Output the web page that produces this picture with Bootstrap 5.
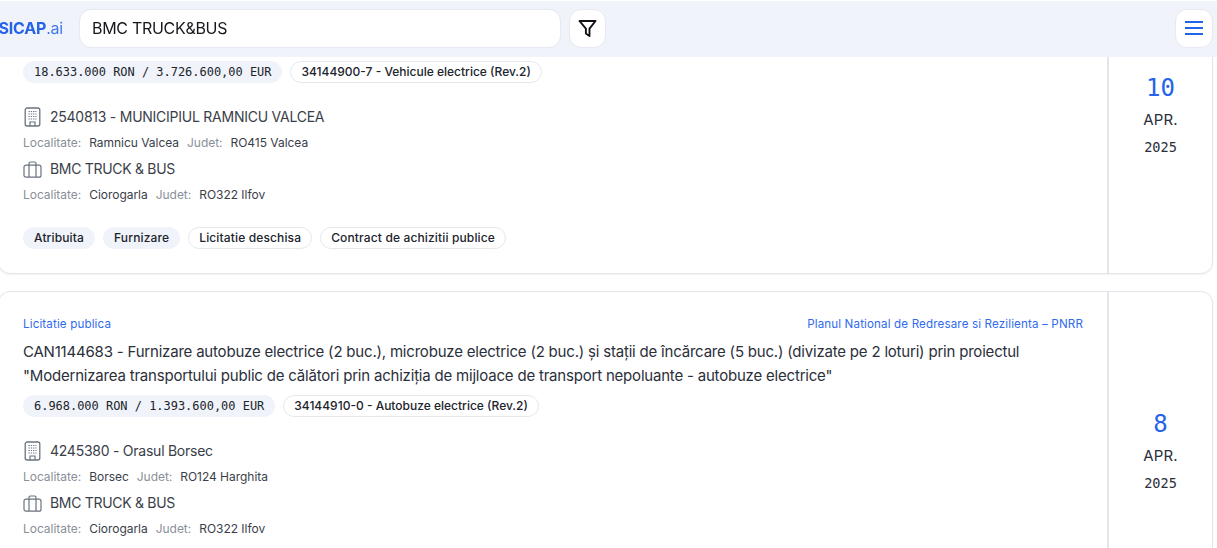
<!DOCTYPE html>
<html lang="ro"><head><meta charset="utf-8"><title>SICAP.ai</title>
<link href="https://cdn.jsdelivr.net/npm/bootstrap@5.3.0/dist/css/bootstrap.min.css" rel="stylesheet">
<style>
html,body{height:100%;overflow:hidden;background:#fff}
body{font-family:Inter,"Noto Sans",sans-serif;color:#2b2f3a}
.topbar{height:57px;background:#f0f3f9;padding:8px 4px 10px 0;border-top:1px solid #fff}
.brandbox{width:63px;font-size:16px;letter-spacing:-.2px;color:#2563eb;flex:none;white-space:nowrap}
.brandbox b{font-weight:700}
.brandbox span{font-weight:400;opacity:.85}
.searchbox{width:482px;height:39px;flex:none;margin-left:16px;border:1px solid #e6e9f1;border-radius:12px;font-size:16px;letter-spacing:-.3px;color:#15171c;padding:0 12px;box-shadow:none}
.squarebtn{width:38px;height:39px;padding:0;border:1px solid #e6e9f1;border-radius:12px;background:#fff;flex:none}
.filterbtn{width:37px}
.feed{margin:-43px 4px 0 -2px}
.notice{min-height:316px;border:1px solid #e4e6ec;border-radius:12px;box-shadow:0 1px 2px rgba(20,25,40,.06);margin-bottom:17px;overflow:hidden}
.notice:last-child{min-height:320px}
.notice-main{padding:24px;min-width:0}
.notice-clipped{padding-top:97px}
.datecol{width:105px;flex:none;border-left:2px solid #e3e5ed;color:#2b2f3a}
.daynum{font-family:"DejaVu Sans Mono",monospace;font-size:24px;line-height:28px;color:#2563eb}
.monthtxt{font-size:15px;line-height:20px;margin-top:8px;letter-spacing:.1px}
.yeartxt{font-family:"DejaVu Sans Mono",monospace;font-size:13.6px;line-height:20px;margin-top:7px}
.kindline{font-size:11.6px;line-height:16px;color:#2f6bed;letter-spacing:.14px}
.titleline{font-size:15px;line-height:24px;letter-spacing:-.2px;margin-top:8px;color:#2b2f3a}
.chiprow{gap:8px;margin-top:7px}
.notice-clipped>.chiprow:first-child{margin-top:6px}
.pillchip{height:22px;line-height:20px;border-radius:11px;font-size:12px;font-weight:500;padding:0 10px;border:1px solid #e6e8ee;background:#fff;color:#20232c;white-space:nowrap}
.pillchip.filled{background:#f0f3f9;border-color:#f0f3f9}
.pillchip.monochip{font-family:"DejaVu Sans Mono",monospace;font-size:11.96px;font-weight:400}
.tagline .pillchip{letter-spacing:.14px}
.partyrow{font-size:14px;line-height:20px;letter-spacing:-.3px;color:#3a3e49;gap:8px;height:20px}
.partyrow svg{flex:none;color:#6b7280}
.partyrow.wide{letter-spacing:-.25px}
.partymeta{font-size:12px;line-height:16px;color:#8a8f9a;margin-top:8px;gap:8px;margin-bottom:8px;letter-spacing:-.03px}
.partymeta i{font-style:normal;color:#3a3e49}
.tagline{margin-top:24px}
.partyfirst{margin-top:24px}
</style></head>
<body>
<header class="topbar fixed-top d-flex align-items-center">
  <div class="brandbox d-flex justify-content-end"><b>SICAP</b><span>.ai</span></div>
  <div class="form-control searchbox d-flex align-items-center">BMC TRUCK&amp;BUS</div>
  <button type="button" class="btn squarebtn filterbtn ms-2 d-flex align-items-center justify-content-center" aria-label="Filtre">
    <svg width="19" height="19" viewBox="0 0 19 19" fill="none" stroke="#111" stroke-width="1.9" stroke-linejoin="round"><path d="M1.5 2h16l-6 7.6v7.4l-3.6-2.6V9.6z"/></svg>
  </button>
  <button type="button" class="btn squarebtn ms-auto d-flex align-items-center justify-content-center" aria-label="Meniu">
    <svg width="18" height="14" viewBox="0 0 18 14" fill="#2563eb"><rect y="0" width="18" height="2"/><rect y="6" width="18" height="2"/><rect y="12" width="18" height="2"/></svg>
  </button>
</header>
<svg width="0" height="0" class="position-absolute">
  <defs>
    <symbol id="ico-building" viewBox="0 0 18 20">
      <rect x="1.7" y="1" width="14.6" height="18" rx="2" fill="none" stroke="currentColor" stroke-width="1.3"/>
      <path d="M5 4.5h8M5 7h8M5 9.5h8M5 12h8" stroke="currentColor" stroke-width="1.2" stroke-dasharray="1.3 1" fill="none"/>
      <path d="M6.5 19v-4h5v4" fill="none" stroke="currentColor" stroke-width="1.2"/>
    </symbol>
    <symbol id="ico-case" viewBox="0 0 19 17">
      <rect x="1" y="4.2" width="17" height="12" rx="2" fill="none" stroke="currentColor" stroke-width="1.2"/>
      <path d="M6 16V2.4A1.4 1.4 0 0 1 7.4 1h4.2A1.4 1.4 0 0 1 13 2.4V16" fill="none" stroke="currentColor" stroke-width="1.2"/>
    </symbol>
  </defs>
</svg>
<main class="feed">
  <article class="notice card flex-row">
    <div class="notice-main notice-clipped flex-grow-1">
      <div class="d-flex chiprow"><span class="pillchip filled monochip">18.633.000 RON / 3.726.600,00 EUR</span><span class="pillchip">34144900-7 - Vehicule electrice (Rev.2)</span></div>
      <div class="partyrow wide d-flex align-items-center partyfirst"><svg width="19" height="20"><use href="#ico-building"/></svg>2540813 - MUNICIPIUL RAMNICU VALCEA</div>
      <div class="partymeta d-flex"><span>Localitate:</span><i>Ramnicu Valcea</i><span>Judet:</span><i>RO415 Valcea</i></div>
      <div class="partyrow d-flex align-items-center"><svg width="19" height="17"><use href="#ico-case"/></svg>BMC TRUCK &amp; BUS</div>
      <div class="partymeta d-flex"><span>Localitate:</span><i>Ciorogarla</i><span>Judet:</span><i>RO322 Ilfov</i></div>
      <div class="d-flex chiprow tagline"><span class="pillchip filled">Atribuita</span><span class="pillchip filled">Furnizare</span><span class="pillchip">Licitatie deschisa</span><span class="pillchip">Contract de achizitii publice</span></div>
    </div>
    <div class="datecol d-flex flex-column align-items-center justify-content-center">
      <div class="daynum">10</div><div class="monthtxt">APR.</div><div class="yeartxt">2025</div>
    </div>
  </article>
  <article class="notice card flex-row">
    <div class="notice-main flex-grow-1">
      <div class="d-flex justify-content-between kindline"><span>Licitatie publica</span><span>Planul National de Redresare si Rezilienta – PNRR</span></div>
      <div class="titleline">CAN1144683 - Furnizare autobuze electrice (2 buc.), microbuze electrice (2 buc.) și stații de încărcare (5 buc.) (divizate pe 2 loturi) prin proiectul "Modernizarea transportului public de călători prin achiziția de mijloace de transport nepoluante - autobuze electrice"</div>
      <div class="d-flex chiprow"><span class="pillchip filled monochip">6.968.000 RON / 1.393.600,00 EUR</span><span class="pillchip">34144910-0 - Autobuze electrice (Rev.2)</span></div>
      <div class="partyrow wide d-flex align-items-center partyfirst"><svg width="19" height="20"><use href="#ico-building"/></svg>4245380 - Orasul Borsec</div>
      <div class="partymeta d-flex"><span>Localitate:</span><i>Borsec</i><span>Judet:</span><i>RO124 Harghita</i></div>
      <div class="partyrow d-flex align-items-center"><svg width="19" height="17"><use href="#ico-case"/></svg>BMC TRUCK &amp; BUS</div>
      <div class="partymeta d-flex"><span>Localitate:</span><i>Ciorogarla</i><span>Judet:</span><i>RO322 Ilfov</i></div>
    </div>
    <div class="datecol d-flex flex-column align-items-center justify-content-center">
      <div class="daynum">8</div><div class="monthtxt">APR.</div><div class="yeartxt">2025</div>
    </div>
  </article>
</main>
<script src="https://cdn.jsdelivr.net/npm/bootstrap@5.3.0/dist/js/bootstrap.bundle.min.js"></script>
</body></html>
